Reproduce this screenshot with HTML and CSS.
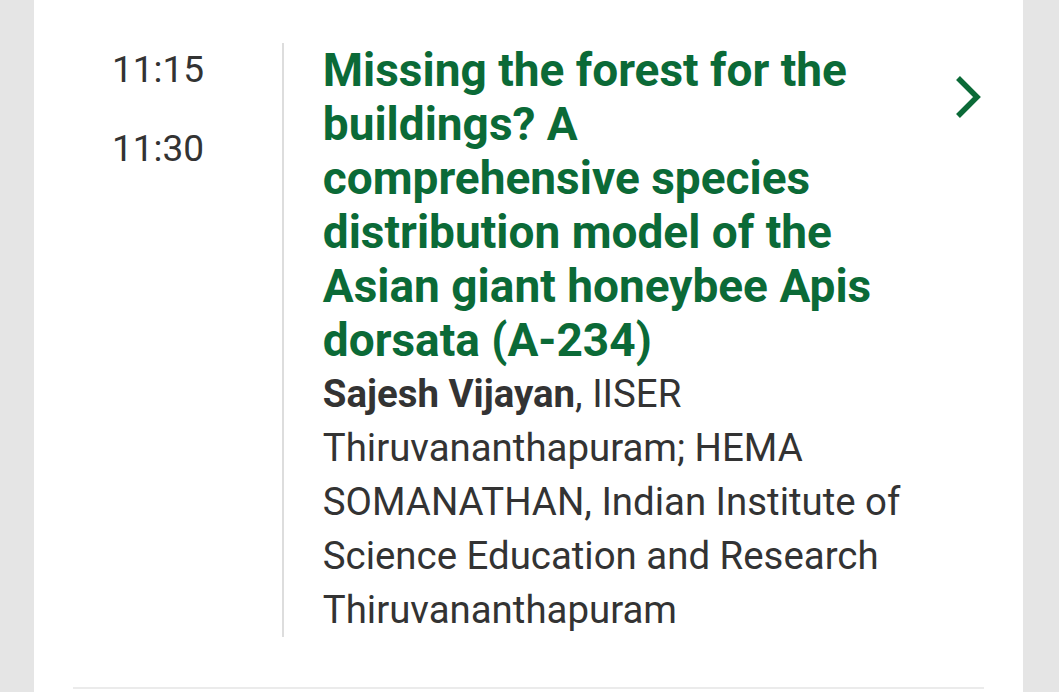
FILE: index.html
```html
<!DOCTYPE html>
<html lang="en">
<head>
    <meta charset="UTF-8">
    <meta name="viewport" content="width=device-width, initial-scale=1.0">
    <title>Programme</title>
    <link rel="stylesheet" href="styles.css">
</head>
<body>
    <div class="card">
        <div class="session">
            <div class="times">
                <div class="time">11:15</div>
                <div class="time end">11:30</div>
            </div>
            <div class="details">
                <div class="title">Missing the forest for the buildings? A comprehensive species distribution model of the Asian giant honeybee Apis dorsata (A-234)</div>
                <div class="authors"><b>Sajesh Vijayan</b>, IISER Thiruvananthapuram; HEMA SOMANATHAN, Indian Institute of Science Education and Research Thiruvananthapuram</div>
            </div>
            <div class="arrow">
                <svg width="30" height="46" viewBox="0 0 30 46">
                    <polyline points="4,4 23,23 4,42" fill="none" stroke="#0b6a37" stroke-width="5.5"/>
                </svg>
            </div>
        </div>
    </div>
</body>
</html>
```

FILE: styles.css
```css
body {
    margin: 0;
    background-color: #e5e5e5;
    font-family: Roboto, 'Liberation Sans', sans-serif;
    color: #333;
}
.card {
    background: #fff;
    margin: 0 36px 0 34px;
    padding: 0 39px;
    min-height: 692px;
}
.session {
    display: flex;
    padding: 43px 0 50px;
    border-bottom: 2px solid #ebebeb;
}
.times {
    width: 170px;
    padding: 1px 0 0 39px;
    font-size: 37px;
    line-height: 52px;
}
.time.end {
    margin-top: 27px;
}
.details {
    width: 582px;
    border-left: 2px solid #ddd;
    padding-left: 39px;
}
.title {
    color: #0b6a37;
    font-weight: bold;
    font-size: 46px;
    line-height: 54px;
}
.authors {
    font-size: 38.4px;
    line-height: 54px;
}
.authors b {
    font-weight: bold;
}
.arrow {
    padding: 31px 0 0 50px;
}
```
